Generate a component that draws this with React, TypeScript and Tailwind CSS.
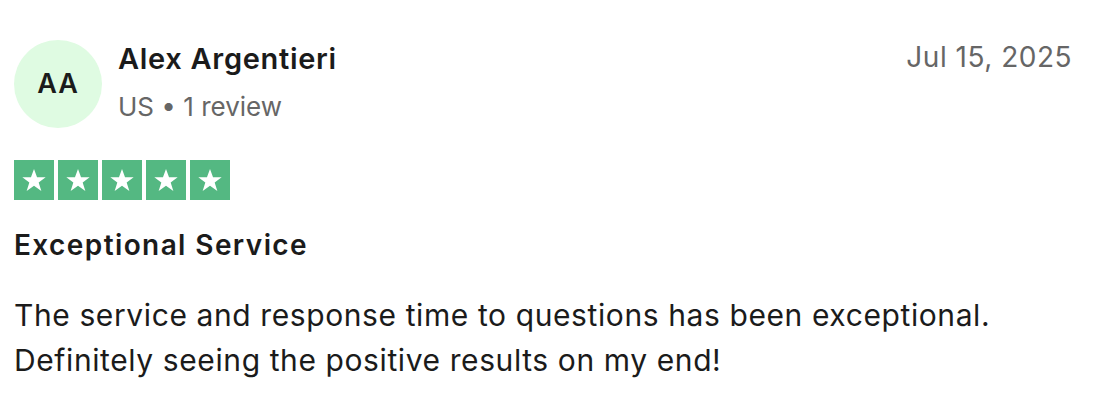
export default function App() {
  return (
    <div className="w-[1096px] h-[402px] bg-white pl-[14px] pr-[24px] pt-[40px]" style={{ fontFamily: "Inter, 'Liberation Sans', sans-serif" }}>
      <div className="flex items-start justify-between">
        <div className="flex items-start gap-4">
          <div className="w-[88px] h-[88px] rounded-full bg-[#dffbe2] flex items-center justify-center text-[27px] font-semibold text-[#1b1b1b] tracking-[1px]">
            AA
          </div>
          <div className="flex flex-col">
            <div className="text-[29px] leading-[38px] font-semibold text-[#1b1b1b] tracking-[0.7px]">Alex Argentieri</div>
            <div className="mt-[11px] text-[26px] leading-[36px] text-[#666666]">US • 1 review</div>
          </div>
        </div>
        <div className="text-[28px] leading-[34px] text-[#666666] tracking-[0.5px]">Jul 15, 2025</div>
      </div>

      <div className="flex gap-1 mt-[32px]">
        {[0, 1, 2, 3, 4].map((i) => (
          <div key={i} className="w-10 h-10 bg-[#54b882] flex items-center justify-center">
            <svg viewBox="0 0 24 24" className="w-[28px] h-[28px]">
              <path d="M12 2.5l2.6 7.1h7.4l-6 4.5 2.3 7.4L12 17l-6.3 4.5 2.3-7.4-6-4.5h7.4z" fill="white" />
            </svg>
          </div>
        ))}
      </div>

      <div className="mt-[25px] text-[28px] leading-[40px] font-semibold text-[#1b1b1b] tracking-[1.4px]">Exceptional Service</div>

      <p className="mt-[28px] text-[30px] leading-[45px] text-[#1b1b1b] tracking-[0.6px]">
        The service and response time to questions has been exceptional. Definitely seeing the positive results on my end!
      </p>
    </div>
  );
}
